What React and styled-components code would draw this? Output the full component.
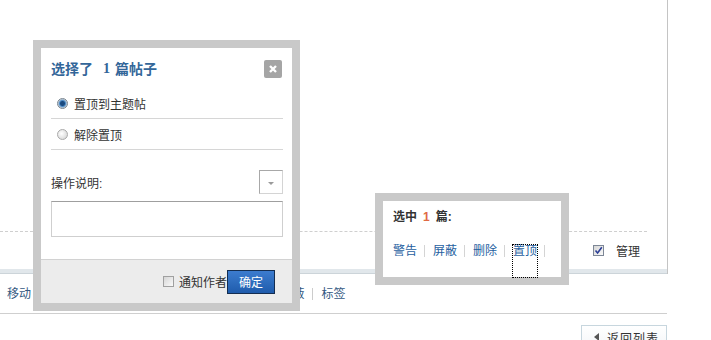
import React from 'react';
import styled, { createGlobalStyle } from 'styled-components';

const GlobalStyle = createGlobalStyle`
  html, body {
    margin: 0;
    padding: 0;
    background: #fff;
  }
  body {
    font-family: "Liberation Sans", "Noto Sans CJK SC", sans-serif;
    font-size: 12px;
    color: #333;
  }
`;

const Page = styled.div`
  position: relative;
  width: 711px;
  height: 340px;
  overflow: hidden;
`;

// --- page behind the popups ---
const Main = styled.div`
  width: 667px;
  height: 274px;
  border-right: 1px solid #c4c4c4;
  display: flex;
  flex-direction: column;
  justify-content: flex-end;
`;

const ManageRow = styled.div`
  height: 37px;
  margin-right: 20px;
  border-top: 1px dashed #cfcfcf;
  display: flex;
  align-items: center;
  justify-content: flex-end;
  padding-right: 7px;
  gap: 12px;
`;

const Band = styled.div`
  height: 4px;
  background: #e1e7eb;
  border-bottom: 1px solid #ccd4d9;
`;

const Toolbar = styled.div`
  width: 660px;
  height: 39px;
  border-bottom: 1px solid #cfcfcf;
  display: flex;
  align-items: center;
  padding-left: 7px;
`;

const ToolLink = styled.span`
  color: #33587f;
  line-height: 14px;
  white-space: nowrap;
`;

const Sep = styled.span`
  width: 1px;
  height: 12px;
  background: ${(p) => p.$color || '#cccccc'};
  margin: ${(p) => p.$margin || '0 8px'};
  flex: none;
`;

const BackButton = styled.div`
  margin: 11px 0 0 581px;
  width: 86px;
  height: 24px;
  box-sizing: border-box;
  border: 1px solid #c7d6de;
  background: linear-gradient(#ffffff, #f3f6f8);
  display: flex;
  align-items: center;
  padding-left: 12px;
  gap: 8px;
  color: #333;
  font-size: 12px;
  letter-spacing: 1px;
`;

const Arrow = styled.span`
  width: 0;
  height: 0;
  border-top: 4px solid transparent;
  border-bottom: 4px solid transparent;
  border-right: 5px solid #555;
`;

const CheckBox = styled.span`
  width: 11px;
  height: 11px;
  box-sizing: border-box;
  border: 1px solid ${(p) => (p.$checked ? '#7d8796' : '#a0a0a0')};
  background: linear-gradient(135deg, #d6d6d6, #fafafa);
  display: inline-flex;
  align-items: center;
  justify-content: center;
  flex: none;
`;

// --- left popup ---
const Dialog = styled.div`
  position: absolute;
  left: 33px;
  top: 40px;
  width: 267px;
  height: 271px;
  box-sizing: border-box;
  border: 8px solid #c9c9c9;
  background: #fff;
  display: flex;
  flex-direction: column;
`;

const DialogHead = styled.div`
  display: flex;
  align-items: center;
  justify-content: space-between;
  padding: 12px 10px 0 10px;
  height: 18px;
  box-sizing: content-box;
`;

const Title = styled.div`
  font-size: 14px;
  font-weight: bold;
  color: #336699;
  line-height: 18px;
  display: flex;
  align-items: center;
`;

const Count = styled.span`
  margin: ${(p) => p.$margin};
  color: ${(p) => p.$color || 'inherit'};
  font-family: ${(p) => (p.$serif ? '"Liberation Serif", serif' : 'inherit')};
`;

const CloseBtn = styled.span`
  width: 18px;
  height: 18px;
  border-radius: 2px;
  background: #a5a5a5;
  display: flex;
  align-items: center;
  justify-content: center;
`;

const Options = styled.div`
  margin-top: 10px;
  padding: 0 9px 0 10px;
`;

const Option = styled.label`
  height: 30px;
  border-bottom: 1px solid #d6d6d6;
  display: flex;
  align-items: center;
  padding-left: 6px;
  gap: 6px;
  color: #333;
`;

const Radio = styled.span`
  width: 11px;
  height: 11px;
  box-sizing: border-box;
  border-radius: 50%;
  border: 1px solid ${(p) => (p.$on ? '#7a8590' : '#a9a9a9')};
  background: ${(p) =>
    p.$on
      ? 'radial-gradient(circle, #1a4a80 0 2px, #4d8bc6 3px, #cfd6dc 4.5px)'
      : 'radial-gradient(circle at 40% 40%, #ffffff, #cfcfcf)'};
`;

const Desc = styled.div`
  padding: 20px 9px 0 10px;
`;

const DescHead = styled.div`
  display: flex;
  align-items: center;
  justify-content: space-between;
`;

const SelectBox = styled.span`
  width: 24px;
  height: 24px;
  box-sizing: border-box;
  border: 1px solid #d4d4d4;
  border-top-color: #a8a8a8;
  border-left-color: #a8a8a8;
  display: flex;
  align-items: center;
  justify-content: center;
  &::after {
    content: '';
    border-left: 3px solid transparent;
    border-right: 3px solid transparent;
    border-top: 3px solid #9a9a9a;
    margin-top: 2px;
  }
`;

const TextArea = styled.textarea`
  display: block;
  margin-top: 7px;
  width: 232px;
  height: 36px;
  box-sizing: border-box;
  border: 1px solid #cfcfcf;
  border-top-color: #9f9f9f;
  resize: none;
  outline: none;
  padding: 2px;
  font: inherit;
`;

const Footer = styled.div`
  margin-top: auto;
  height: 44px;
  box-sizing: border-box;
  border-top: 1px solid #d2d2d2;
  background: #ececec;
  display: flex;
  align-items: center;
  justify-content: flex-end;
  padding-right: 17px;
`;

const Notify = styled.label`
  display: flex;
  align-items: center;
  gap: 5px;
  color: #333;
`;

const Confirm = styled.button`
  width: 48px;
  height: 24px;
  box-sizing: border-box;
  border: 1px solid #142d50;
  background: linear-gradient(#3c7ccf, #1f5cac);
  color: #fff;
  font: inherit;
  padding: 0;
  cursor: pointer;
`;

// --- right popup ---
const Pick = styled.div`
  position: absolute;
  left: 375px;
  top: 193px;
  width: 194px;
  height: 92px;
  box-sizing: border-box;
  border: 8px solid #c9c9c9;
  background: #fff;
  padding-left: 10px;
`;

const PickTitle = styled.div`
  margin-top: 8px;
  line-height: 16px;
  font-weight: bold;
  color: #333;
  display: flex;
  align-items: center;
`;

const PickLinks = styled.div`
  margin-top: 20px;
  display: flex;
  align-items: flex-start;
  height: 32px;
`;

const PickLink = styled.a`
  color: #1f5f9f;
  text-decoration: none;
  line-height: 12px;
  height: ${(p) => (p.$focus ? '32px' : 'auto')};
  outline: ${(p) => (p.$focus ? '1px dotted #000' : 'none')};
  outline-offset: 0;
  white-space: nowrap;
`;

const toolItems = ['移动', '分类', '高亮', '图章', '关闭', '提升/下沉', '屏蔽', '标签'];
const pickItems = ['警告', '屏蔽', '删除', '置顶'];

export default function App() {
  return (
    <Page>
      <GlobalStyle />
      <Main>
        <ManageRow>
          <CheckBox $checked>
            <svg width="9" height="9" viewBox="0 0 9 9">
              <path d="M1.5 4.5 L3.6 7 L7.8 1.2" fill="none" stroke="#2c3f96" strokeWidth="1.6" />
            </svg>
          </CheckBox>
          <span>管理</span>
        </ManageRow>
        <Band />
      </Main>
      <Toolbar>
        {toolItems.map((t, i) => (
          <React.Fragment key={t}>
            {i > 0 && <Sep />}
            <ToolLink>{t}</ToolLink>
          </React.Fragment>
        ))}
      </Toolbar>
      <BackButton>
        <Arrow />
        返回列表
      </BackButton>

      <Dialog>
        <DialogHead>
          <Title>
            选择了<Count $margin="0 5px 0 10px" $serif>1</Count>篇帖子
          </Title>
          <CloseBtn>
            <svg width="10" height="10" viewBox="0 0 10 10">
              <path d="M2 2 L8 8 M8 2 L2 8" stroke="#fff" strokeWidth="2.4" />
            </svg>
          </CloseBtn>
        </DialogHead>
        <Options>
          <Option>
            <Radio $on />
            置顶到主题帖
          </Option>
          <Option>
            <Radio />
            解除置顶
          </Option>
        </Options>
        <Desc>
          <DescHead>
            <span>操作说明:</span>
            <SelectBox />
          </DescHead>
          <TextArea />
        </Desc>
        <Footer>
          <Notify>
            <CheckBox />
            通知作者
          </Notify>
          <Confirm>确定</Confirm>
        </Footer>
      </Dialog>

      <Pick>
        <PickTitle>
          选中<Count $margin="0 6px" $color="#e06a45">1</Count>篇:
        </PickTitle>
        <PickLinks>
          {pickItems.map((t) => (
            <React.Fragment key={t}>
              <PickLink href="#" $focus={t === '置顶'}>{t}</PickLink>
              <Sep $color="#d4d4d4" $margin="0 8px 0 7px" />
            </React.Fragment>
          ))}
        </PickLinks>
      </Pick>
    </Page>
  );
}
